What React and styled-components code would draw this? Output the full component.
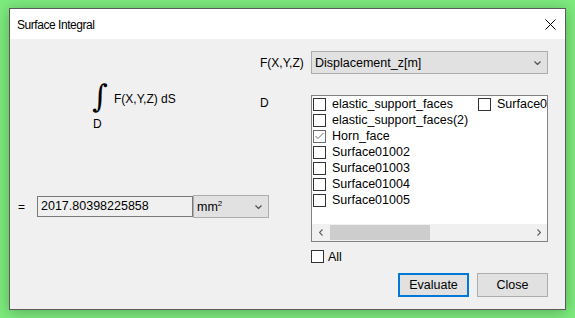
import React from 'react';
import styled, { createGlobalStyle } from 'styled-components';

const GlobalStyle = createGlobalStyle`
  html, body {
    margin: 0;
    padding: 0;
    background: #7deb7d;
  }
  body {
    width: 575px;
    height: 318px;
    overflow: hidden;
    font-family: "Liberation Sans", Arial, sans-serif;
    font-size: 12px;
    color: #000;
  }
`;

const Page = styled.div`
  padding: 8px 0 0 9px;
`;

const Window = styled.div`
  box-sizing: border-box;
  width: 557px;
  height: 302px;
  border: 1px solid #5a5a5a;
  background: #f0f0f0;
  box-shadow: 0 2px 14px rgba(0, 0, 0, 0.28);
  display: flex;
  flex-direction: column;
`;

const TitleBar = styled.div`
  height: 30px;
  background: #fff;
  display: flex;
  align-items: center;
  justify-content: space-between;
  padding: 0 9px 0 7px;
`;

const Title = styled.span`
  font-size: 12px;
  letter-spacing: -0.45px;
  color: #000;
  padding-top: 1px;
`;

const CloseGlyph = styled.svg`
  display: block;
  margin-top: 1px;
`;

const Body = styled.div`
  flex: 1;
  display: flex;
`;

const LeftPane = styled.div`
  width: 250px;
  flex-shrink: 0;
  display: flex;
  flex-direction: column;
  padding-top: 40px;
`;

const Formula = styled.div`
  display: grid;
  grid-template-columns: 16px auto;
  column-gap: 6px;
  margin-left: 82px;
  height: 50px;
`;

const IntegralSign = styled.span`
  font-family: "DejaVu Serif", serif;
  font-size: 30px;
  line-height: 36px;
  height: 36px;
  transform: scaleY(1.05);
`;

const FormulaText = styled.span`
  align-self: center;
  line-height: 14px;
  padding-top: 4px;
`;

const LowerLimit = styled.span`
  line-height: 14px;
  margin: 2px 0 0 1px;
`;

const ResultRow = styled.div`
  display: flex;
  align-items: center;
  margin-top: 66px;
  padding-left: 8px;

  & > * {
    flex-shrink: 0;
  }
`;

const EqualsSign = styled.span`
  width: 19px;
`;

const ValueBox = styled.div`
  box-sizing: border-box;
  width: 156px;
  height: 21px;
  border: 1px solid #7a7a7a;
  background: #f0f0f0;
  padding: 2px 0 0 3px;
  line-height: 15px;
  font-size: 12.5px;
`;

const ComboBox = styled.div`
  box-sizing: border-box;
  width: ${({ width }) => width}px;
  height: ${({ height }) => height || 23}px;
  border: 1px solid #adadad;
  background: #e1e1e1;
  display: flex;
  align-items: center;
  justify-content: space-between;
  padding: 0 6px 0 3px;
  font-size: 12.5px;
`;

const Sup = styled.sup`
  font-size: 8px;
  vertical-align: 5px;
  line-height: 0;
`;

const RightPane = styled.div`
  flex: 1;
  display: flex;
  flex-direction: column;
  padding: 12px 17px 0 0;
`;

const FieldRow = styled.div`
  display: flex;
  align-items: ${({ top }) => (top ? 'flex-start' : 'center')};
  margin-top: ${({ gap }) => gap || 0}px;
`;

const FieldLabel = styled.span`
  width: 51px;
  line-height: 14px;
  padding-top: ${({ top }) => (top ? 1 : 0)}px;
`;

const ListBox = styled.div`
  box-sizing: border-box;
  width: 237px;
  height: 147px;
  border: 1px solid #828282;
  background: #fff;
  display: flex;
  flex-direction: column;
`;

const ListColumns = styled.div`
  flex: 1;
  display: flex;
  overflow: hidden;
  padding-left: 1px;
`;

const ListColumn = styled.div`
  width: 165px;
  flex-shrink: 0;
  display: flex;
  flex-direction: column;
`;

const ListItem = styled.div`
  height: 16px;
  display: flex;
  align-items: center;
  white-space: nowrap;
  font-size: 12.5px;
`;

const Box = styled.span`
  box-sizing: border-box;
  width: 13px;
  height: 13px;
  border: 1px solid ${({ checked }) => (checked ? '#6d6d6d' : '#333')};
  background: #fff;
  margin-right: ${({ gap }) => gap || 6}px;
  display: flex;
  align-items: center;
  justify-content: center;
  flex-shrink: 0;
`;

const ScrollBar = styled.div`
  height: 17px;
  background: #f0f0f0;
  display: flex;
  align-items: center;
`;

const ScrollArrow = styled.div`
  width: 17px;
  height: 17px;
  display: flex;
  align-items: center;
  justify-content: center;
`;

const ScrollTrack = styled.div`
  flex: 1;
  height: 15px;
  padding: 0 1px;
`;

const ScrollThumb = styled.div`
  width: 100px;
  height: 15px;
  background: #cdcdcd;
`;

const AllRow = styled.label`
  display: flex;
  align-items: center;
  margin: 8px 0 0 51px;
  height: 13px;
  font-size: 12.5px;
`;

const ButtonRow = styled.div`
  display: flex;
  justify-content: flex-end;
  gap: 8px;
  margin-top: 10px;
`;

const Button = styled.button`
  box-sizing: border-box;
  width: 71px;
  height: 24px;
  font-family: "Liberation Sans", Arial, sans-serif;
  font-size: 12.5px;
  color: #000;
  background: #e1e1e1;
  border: ${({ primary }) => (primary ? '2px solid #0078d7' : '1px solid #adadad')};
  padding: 0;
`;

const Chevron = ({ dir = 'down', color = '#505050' }) => {
  const paths = {
    down: 'M0.5 0.5 L3.5 3.5 L6.5 0.5',
    left: 'M3.5 0.5 L0.5 3.5 L3.5 6.5',
    right: 'M0.5 0.5 L3.5 3.5 L0.5 6.5',
  };
  const size = dir === 'down' ? [7, 4] : [4, 7];
  return (
    <svg width={size[0]} height={size[1]} viewBox={`0 0 ${size[0]} ${size[1]}`}>
      <path d={paths[dir]} fill="none" stroke={color} strokeWidth="1.2" />
    </svg>
  );
};

const CheckBox = ({ checked, gap }) => (
  <Box checked={checked} gap={gap}>
    {checked && (
      <svg width="9" height="8" viewBox="0 0 9 8">
        <path d="M0.5 4 L3 6.5 L8.5 1" fill="none" stroke="#6d6d6d" strokeWidth="1" />
      </svg>
    )}
  </Box>
);

const firstColumn = [
  { name: 'elastic_support_faces' },
  { name: 'elastic_support_faces(2)' },
  { name: 'Horn_face', checked: true },
  { name: 'Surface01002' },
  { name: 'Surface01003' },
  { name: 'Surface01004' },
  { name: 'Surface01005' },
];

const secondColumn = [{ name: 'Surface01001' }];

const App = () => (
  <Page>
    <GlobalStyle />
    <Window>
      <TitleBar>
        <Title>Surface Integral</Title>
        <CloseGlyph width="11" height="11" viewBox="0 0 11 11">
          <path d="M0.5 0.5 L10.5 10.5 M10.5 0.5 L0.5 10.5" stroke="#000" strokeWidth="1" />
        </CloseGlyph>
      </TitleBar>
      <Body>
        <LeftPane>
          <Formula>
            <IntegralSign>∫</IntegralSign>
            <FormulaText>F(X,Y,Z) dS</FormulaText>
            <LowerLimit>D</LowerLimit>
          </Formula>
          <ResultRow>
            <EqualsSign>=</EqualsSign>
            <ValueBox>2017.80398225858</ValueBox>
            <ComboBox width={76} height={23}>
              <span>
                mm<Sup>2</Sup>
              </span>
              <Chevron />
            </ComboBox>
          </ResultRow>
        </LeftPane>
        <RightPane>
          <FieldRow>
            <FieldLabel>F(X,Y,Z)</FieldLabel>
            <ComboBox width={237} height={23}>
              <span>Displacement_z[m]</span>
              <Chevron />
            </ComboBox>
          </FieldRow>
          <FieldRow top gap={21}>
            <FieldLabel top>D</FieldLabel>
            <ListBox>
              <ListColumns>
                <ListColumn>
                  {firstColumn.map((item) => (
                    <ListItem key={item.name}>
                      <CheckBox checked={item.checked} />
                      {item.name}
                    </ListItem>
                  ))}
                </ListColumn>
                <ListColumn>
                  {secondColumn.map((item) => (
                    <ListItem key={item.name}>
                      <CheckBox checked={item.checked} />
                      {item.name}
                    </ListItem>
                  ))}
                </ListColumn>
              </ListColumns>
              <ScrollBar>
                <ScrollArrow>
                  <Chevron dir="left" color="#606060" />
                </ScrollArrow>
                <ScrollTrack>
                  <ScrollThumb />
                </ScrollTrack>
                <ScrollArrow>
                  <Chevron dir="right" color="#606060" />
                </ScrollArrow>
              </ScrollBar>
            </ListBox>
          </FieldRow>
          <AllRow>
            <CheckBox gap={4} />
            All
          </AllRow>
          <ButtonRow>
            <Button primary>Evaluate</Button>
            <Button>Close</Button>
          </ButtonRow>
        </RightPane>
      </Body>
    </Window>
  </Page>
);

export default App;
